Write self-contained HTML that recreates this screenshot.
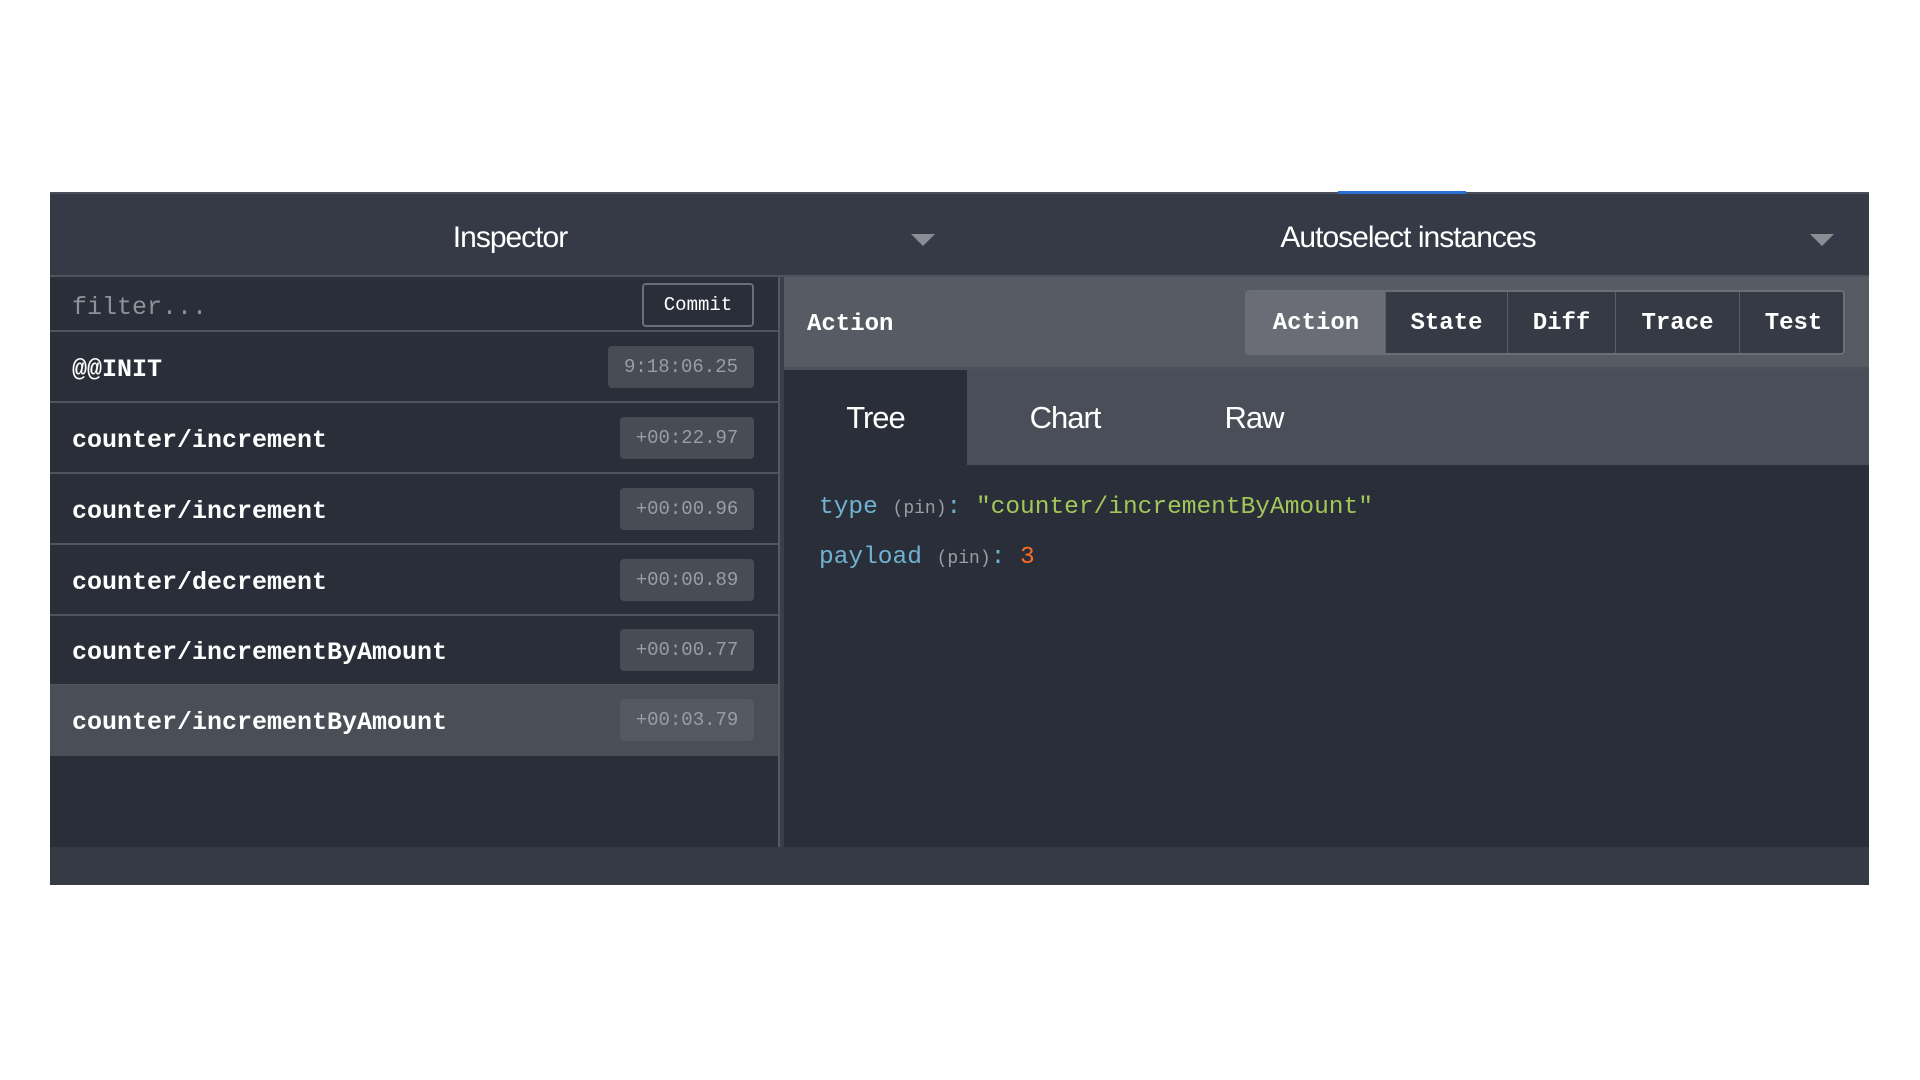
<!DOCTYPE html>
<html><head><style>
*{box-sizing:border-box;margin:0;padding:0}
body{width:1920px;height:1080px;background:#fff;position:relative;overflow:hidden;font-family:"Liberation Sans",sans-serif}
.a{position:absolute}
.mono{font-family:"Liberation Mono","DejaVu Sans Mono",monospace}
.row{position:absolute;left:50px;width:728px;height:71px;border-bottom:2px solid #50545d;color:#fff;font-size:25px;font-weight:bold}
.row span.t{position:absolute;left:22px;top:23px}
.badge{position:absolute;right:24px;top:14px;height:42px;width:134px;background:#484c55;border-radius:4px;color:#9a9da4;font-weight:normal;font-size:19px;text-align:center;line-height:42px}
.seg{position:absolute;top:0;height:65px;line-height:63px;text-align:center;color:#fff;font-size:24px;font-weight:bold;border-left:1px solid #5a5e66}
.arrow{width:0;height:0;border-left:12px solid transparent;border-right:12px solid transparent;border-top:12px solid #8a8d94}
</style></head><body>
<div class="a" style="left:50px;top:192px;width:1819px;height:693px;background:#2a2e38"></div>
<div class="a" style="left:50px;top:192px;width:1819px;height:84px;background:#353a46;border-top:2px solid #4a4e57"></div>
<div class="a" style="left:1338px;top:191px;width:128px;height:3px;background:#2a6fd6"></div>
<div class="a" style="left:380px;top:221px;width:260px;text-align:center;color:#fff;font-size:30px;letter-spacing:-1px">Inspector</div>
<div class="a arrow" style="left:911px;top:234px"></div>
<div class="a" style="left:1208px;top:221px;width:400px;text-align:center;color:#fff;font-size:30px;letter-spacing:-1px">Autoselect instances</div>
<div class="a arrow" style="left:1810px;top:234px"></div>
<div class="a" style="left:50px;top:275px;width:1819px;height:2px;background:#4f535c"></div>
<div class="a mono" style="left:50px;top:277px;width:728px;height:55px;border-bottom:2px solid #50545d">
<span class="a" style="left:22px;top:16px;color:#8f929a;font-size:25px">filter...</span>
<div class="a" style="left:592px;top:6px;width:112px;height:44px;border:2px solid #6a6e76;border-radius:4px;color:#fff;font-size:19px;text-align:center;line-height:40px">Commit</div>
</div>
<div class="row mono" style="top:332px"><span class="t">@@INIT</span><div class="badge" style="width:146px">9:18:06.25</div></div>
<div class="row mono" style="top:403px"><span class="t">counter/increment</span><div class="badge">+00:22.97</div></div>
<div class="row mono" style="top:474px"><span class="t">counter/increment</span><div class="badge">+00:00.96</div></div>
<div class="row mono" style="top:545px"><span class="t">counter/decrement</span><div class="badge">+00:00.89</div></div>
<div class="row mono" style="top:615px"><span class="t">counter/incrementByAmount</span><div class="badge">+00:00.77</div></div>
<div class="row mono" style="top:685px;background:#4a4e57;border-bottom:none"><span class="t">counter/incrementByAmount</span><div class="badge" style="background:#555962">+00:03.79</div></div>
<div class="a" style="left:778px;top:277px;width:6px;height:570px;background:#3a3e48;border-left:2px solid #555962"></div>
<div class="a" style="left:50px;top:847px;width:1819px;height:38px;background:#363a45"></div>
<div class="a" style="left:784px;top:277px;width:1085px;height:93px;background:#575b63;border-bottom:3px solid #4c5058"></div>
<div class="a mono" style="left:807px;top:311px;color:#fff;font-size:24px;font-weight:bold">Action</div>
<div class="a mono" style="left:1245px;top:290px;width:600px;height:65px;background:#363a45;border:2px solid #6a6e76;border-radius:4px;overflow:hidden">
<div class="seg" style="left:0;width:138px;background:#6a6d75;border-left:none">Action</div>
<div class="seg" style="left:138px;width:122px">State</div>
<div class="seg" style="left:260px;width:108px">Diff</div>
<div class="seg" style="left:368px;width:124px">Trace</div>
<div class="seg" style="left:492px;width:108px">Test</div>
</div>
<div class="a" style="left:784px;top:370px;width:1085px;height:95px;background:#4a4e58"></div>
<div class="a" style="left:784px;top:370px;width:183px;height:95px;background:#2a2e38"></div>
<div class="a" style="left:784px;top:400px;width:183px;text-align:center;color:#fff;font-size:31px;letter-spacing:-1px">Tree</div>
<div class="a" style="left:985px;top:400px;width:160px;text-align:center;color:#fff;font-size:31px;letter-spacing:-1px">Chart</div>
<div class="a" style="left:1174px;top:400px;width:160px;text-align:center;color:#fff;font-size:31px;letter-spacing:-1px">Raw</div>
<div class="a mono" style="left:819px;top:494px;font-size:24.5px;color:#6fb3d2;white-space:pre">type <span style="color:#9a9da4;font-size:18px">(pin)</span>: <span style="color:#a1c659">"counter/incrementByAmount"</span></div>
<div class="a mono" style="left:819px;top:544px;font-size:24.5px;color:#6fb3d2;white-space:pre">payload <span style="color:#9a9da4;font-size:18px">(pin)</span>: <span style="color:#fc6d24">3</span></div>
</body></html>
